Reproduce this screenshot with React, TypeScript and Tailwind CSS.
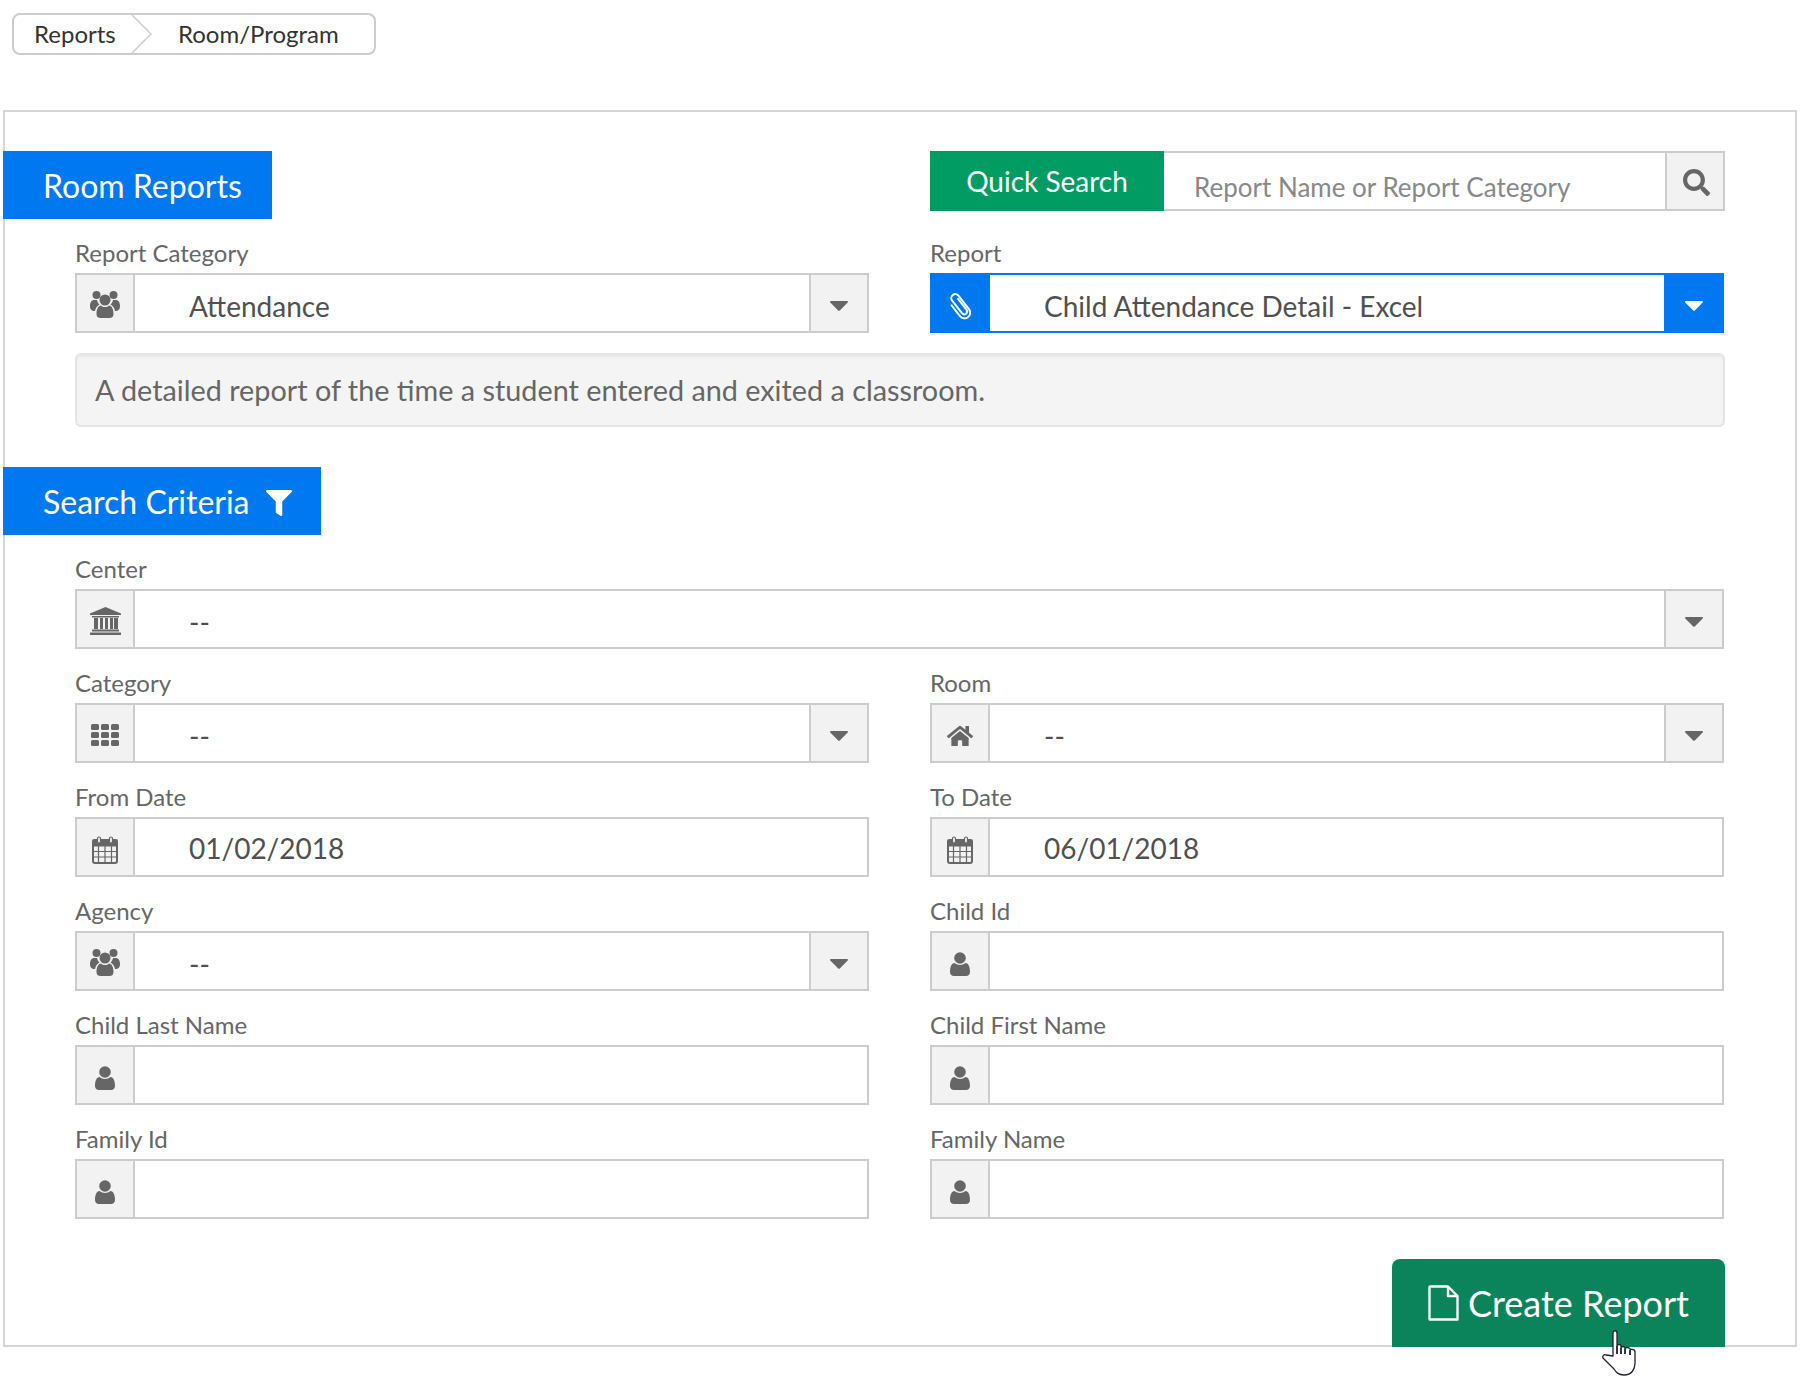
import React from "react";
import { FaHome, FaSearch, FaFilter } from "react-icons/fa";

const Users = () => (
  <svg width="30" height="28" viewBox="0 0 30 28" fill="#666" className="mt-[2px]">
    <circle cx="6.5" cy="5" r="4" />
    <circle cx="23.5" cy="5" r="4" />
    <path d="M0 16c0-4 2-6 4-6h3c.5 2 1.500 3.500 2.500 4.500C7 16 5.500 18 5 21c-3 0-5-1-5-5zM30 16c0-4-2-6-4-6h-3c-.5 2-1.500 3.500-2.500 4.500C23 16 24.500 18 25 21c3 0 5-1 5-5z" />
    <circle cx="15" cy="10" r="5.500" />
    <path d="M6.500 24c0-5 2-8.500 4.500-8.500 1 1 2.500 1.500 4 1.500s3-.5 4-1.500c2.500 0 4.500 3.500 4.500 8.500 0 3-2 4-4 4H10.500c-2 0-4-1-4-4z" />
  </svg>
);

const Bank = () => (
  <svg width="31" height="28" viewBox="0 0 31 28" fill="#666" className="mt-[4px]">
    <path d="M15.500 0L31 6.500V8H0V6.500z" />
    <rect x="2" y="9" width="27" height="1.500" />
    <rect x="4" y="11" width="4" height="11" />
    <rect x="10" y="11" width="3" height="11" />
    <rect x="15" y="11" width="3" height="11" />
    <rect x="20" y="11" width="3" height="11" />
    <rect x="24" y="11" width="4" height="11" />
    <rect x="2" y="22.500" width="27" height="2" />
    <rect x="0" y="25.500" width="31" height="2.500" rx="0.500" />
  </svg>
);

const Grid3 = () => (
  <svg width="28" height="22" viewBox="0 0 28 22" fill="#666" className="mt-[4px]">
    {[0, 8, 16].map((y) =>
      [0, 10, 20].map((x) => <rect key={`${x}-${y}`} x={x} y={y} width="8" height="6" rx="1.500" />),
    )}
  </svg>
);

const Calendar = () => (
  <svg width="26" height="28" viewBox="0 0 26 28" fill="none" stroke="#666" className="mt-[5px]">
    <rect x="1" y="4" width="24" height="23" rx="2" strokeWidth="2" />
    <rect x="1" y="4" width="24" height="6" fill="#666" strokeWidth="1" />
    <path d="M6.500 10v16M13 10v16M19.500 10v16M1 15.500h24M1 21h24" strokeWidth="1.200" />
    <rect x="5.500" y="1" width="3" height="6" rx="1.500" fill="#f2f2f2" strokeWidth="1.200" />
    <rect x="17.500" y="1" width="3" height="6" rx="1.500" fill="#f2f2f2" strokeWidth="1.200" />
  </svg>
);

const PersonIcon = () => (
  <svg width="20" height="24" viewBox="0 0 20 24" fill="#666" className="mt-[5px]">
    <circle cx="10" cy="6" r="5.800" />
    <path d="M0 20c0-5 1.500-9 4.500-9 1.500 1.300 3.500 2 5.500 2s4-.7 5.500-2c3 0 4.500 4 4.500 9 0 2.500-1.800 4-4 4H4c-2.200 0-4-1.500-4-4z" />
  </svg>
);

const Clip = () => (
  <svg width="16" height="30" viewBox="0 0 14 26" fill="none" stroke="#ffffff" strokeWidth="1.700" strokeLinecap="round" className="mt-[5px] rotate-[-38deg]">
    <path d="M9.500 7v12a2.500 2.500 0 0 1-5 0V5a3.500 3.500 0 0 1 7 0v15a5 5 0 0 1-10 0V8" />
  </svg>
);

const FileOutline = () => (
  <svg width="31" height="36" viewBox="0 0 31 36" fill="none" stroke="#ffffff" strokeWidth="2.400" strokeLinejoin="round" className="mr-[9px] shrink-0">
    <path d="M2 1.500h18l9.500 9.500v23.500H2a.5.5 0 0 1-.5-.5V2a.5.5 0 0 1 .5-.5z" />
    <path d="M20 1.500V11h9.500" />
  </svg>
);

const Caret = ({ white }: { white?: boolean }) => (
  <svg width="18" height="10" viewBox="0 0 18 10" fill={white ? "#ffffff" : "#666666"} className="mt-[6px]">
    <path d="M1 0h16c1 0 1.300.8.700 1.500L9.800 9.500c-.4.400-1.200.4-1.600 0L.3 1.500C-.3.8 0 0 1 0z" />
  </svg>
);

const Hand = () => (
  <svg width="34" height="46" viewBox="0 0 34 46" className="absolute left-[210px] top-[71px]" fill="#ffffff" stroke="#20222e" strokeWidth="1.300" strokeLinejoin="round">
    <path d="M11 26V3c0-3 4-3 4 0v13c0-2 4-2 4 0v2c0-2 4-2 4 0v1c0-2 4-2 5 0 1 1 5-1 5 3v11c0 6-3 12-11 12-6 0-8-3-10-6L1 28c-1-2 1-4 3-3z" />
    <path d="M15 16v8M19 18v6M23 19v5M28 20v5" fill="none" strokeWidth="1.800" />
  </svg>
);

const Addon = ({ children, active }: { children?: React.ReactNode; active?: boolean }) => (
  <div
    className={`flex w-[58px] shrink-0 items-center justify-center border-r-2 ${
      active ? "border-[#0078f0] bg-[#0078f0]" : "border-[#cccccc] bg-[#f2f2f2]"
    }`}
  >
    {children}
  </div>
);

type FieldProps = {
  label: string;
  icon: React.ReactNode;
  value?: string;
  caret?: boolean;
  active?: boolean;
  date?: boolean;
};

const Field = ({ label, icon, value, caret, active, date }: FieldProps) => (
  <div className="flex flex-col">
    <label className="flex h-[54px] items-end pb-[5px] text-[24px] leading-[30px] text-[#666666]">{label}</label>
    <div className={`flex h-[60px] border-2 ${active ? "border-[#0078f0]" : "border-[#cccccc]"}`}>
      <Addon active={active}>{icon}</Addon>
      <div className={`flex min-w-0 flex-1 items-center pl-[54px] text-[28px] text-[#505050] ${date ? "pt-[1px]" : "pt-[6px]"}`}>{value}</div>
      {caret && (
        <div
          className={`flex w-[58px] shrink-0 items-center justify-center border-l-2 ${
            active ? "border-[#0078f0] bg-[#0078f0]" : "border-[#cccccc] bg-[#f2f2f2]"
          }`}
        >
          <Caret white={active} />
        </div>
      )}
    </div>
  </div>
);

export default function App() {
  return (
    <div className="min-h-[1380px] bg-white font-['Lato',sans-serif]">
      <div className="pl-[12px] pt-[13px]">
        <div className="flex h-[42px] w-[364px] items-center rounded-[8px] border-2 border-[#cccccc] text-[24px] text-[#333333]">
          <span className="w-[117px] pl-[20px]">Reports</span>
          <svg width="22" height="38" viewBox="0 0 22 38" fill="none" stroke="#cccccc" strokeWidth="1.500" className="shrink-0">
            <path d="M1 0l19 19L1 38" />
          </svg>
          <span className="pl-[25px]">Room/Program</span>
        </div>
      </div>

      <div className="ml-[3px] mt-[55px] h-[1237px] w-[1794px] border-2 border-[#d6d6d6]">
        <div className="mt-[39px] flex items-start">
          <div className="-ml-[2px] flex h-[68px] w-[269px] items-center pl-[40px] pt-[2px] text-[32px] text-white bg-[#0078f0]">
            Room Reports
          </div>
          <div className="ml-[658px] flex h-[60px] w-[795px]">
            <div className="flex w-[234px] items-center justify-center bg-[#009c64] text-[28px] text-white">Quick Search</div>
            <div className="flex flex-1 border-y-2 border-r-2 border-[#cccccc]">
              <div className="flex flex-1 items-center pl-[30px] pt-[12px] text-[26px] text-[#888888]">
                Report Name or Report Category
              </div>
              <div className="flex w-[58px] items-center justify-center border-l-2 border-[#cccccc] bg-[#f2f2f2] pl-[3px] pt-[2px]">
                <FaSearch size={27} color="#666666" />
              </div>
            </div>
          </div>
        </div>

        <div className="ml-[70px] w-[1650px]">
          <div className="grid grid-cols-[794px_794px] gap-x-[61px]">
            <Field label="Report Category" icon={<Users />} value="Attendance" caret />
            <Field label="Report" icon={<Clip />} value="Child Attendance Detail - Excel" caret active />
          </div>
          <div className="mt-[20px] flex h-[74px] items-center rounded-[6px] border-2 border-[#e4e4e4] bg-[#f4f4f4] pl-[18px] pt-[2px] text-[28.800px] text-[#666666] shadow-[inset_0_2px_2px_rgba(0,0,0,0.05)]">
            A detailed report of the time a student entered and exited a classroom.
          </div>
        </div>

        <div className="-ml-[2px] mt-[40px] flex h-[68px] w-[318px] items-center gap-[16px] pl-[40px] pt-[2px] text-[32px] text-white bg-[#0078f0]">
          Search Criteria
          <FaFilter size={26} color="#ffffff" className="mt-[2px]" />
        </div>

        <div className="ml-[70px] grid w-[1649px] grid-cols-[794px_794px] gap-x-[61px]">
          <div className="col-span-2">
            <Field label="Center" icon={<Bank />} value="--" caret />
          </div>
          <Field label="Category" icon={<Grid3 />} value="--" caret />
          <Field label="Room" icon={<FaHome size={26} color="#666666" className="mt-[6px]" />} value="--" caret />
          <Field label="From Date" icon={<Calendar />} value="01/02/2018" date />
          <Field label="To Date" icon={<Calendar />} value="06/01/2018" date />
          <Field label="Agency" icon={<Users />} value="--" caret />
          <Field label="Child Id" icon={<PersonIcon />} />
          <Field label="Child Last Name" icon={<PersonIcon />} />
          <Field label="Child First Name" icon={<PersonIcon />} />
          <Field label="Family Id" icon={<PersonIcon />} />
          <Field label="Family Name" icon={<PersonIcon />} />
        </div>

        <div className="mr-[70px] mt-[40px] flex justify-end">
          <div className="relative flex h-[88px] w-[333px] items-center rounded-t-[8px] bg-[#0b845b] pl-[36px] text-[36px] text-white">
            <FileOutline />
            Create Report
            <Hand />
          </div>
        </div>
      </div>
    </div>
  );
}
